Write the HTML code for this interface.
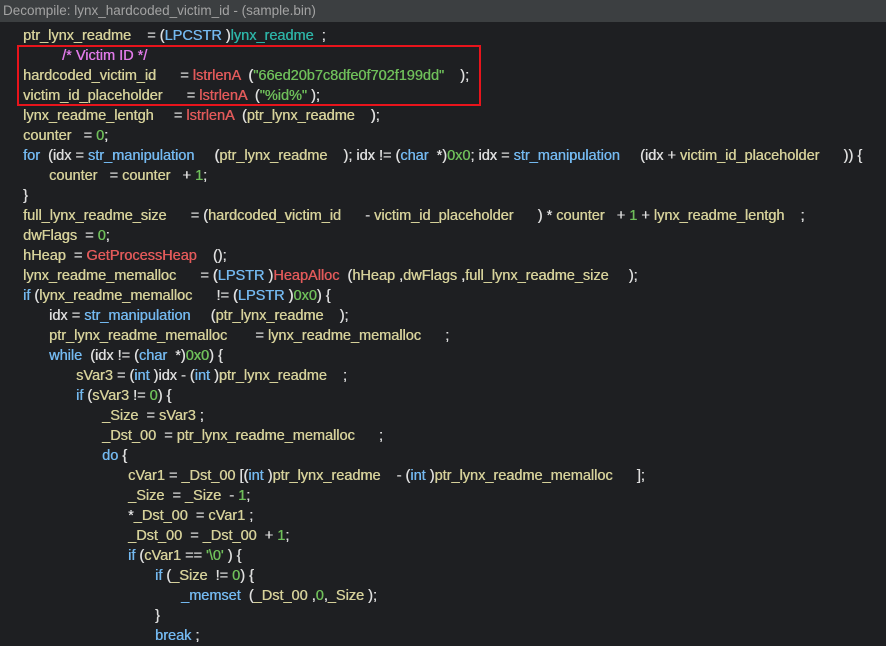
<!DOCTYPE html>
<html><head><meta charset="utf-8"><style>
body{margin:0;width:886px;height:636px;background:#1e1f22;overflow:hidden;font-family:"Liberation Sans",sans-serif;}
#t{position:absolute;left:0;top:0;width:886px;height:22px;background:#3c3f41;color:#a3a3a3;font-size:13.5px;line-height:22px;padding-left:3px;box-sizing:border-box;}
.l{position:absolute;white-space:pre;font-size:14.5px;line-height:20px;color:#dedede;text-shadow:0.4px 0 0 currentColor;}
.v{color:#d6d19a}.k{color:#74b9f0}.f{color:#e25a5a}.s{color:#6fbf5a}.n{color:#6fbf5a}.c{color:#e07ae8}.g{color:#2db3a6}
#box{position:absolute;left:17px;top:45px;width:460px;height:57px;border:2px solid #e8141c;}
</style></head><body>
<div id="t">Decompile: lynx_hardcoded_victim_id -  (sample.bin)</div>
<div class="l" style="left:23px;top:26px"><span class="v">ptr_lynx_readme</span>    = (<span class="k">LPCSTR</span> )<span class="g">lynx_readme</span>  ;</div>
<div class="l" style="left:62px;top:46px"><span class="c">/* Victim ID */</span></div>
<div class="l" style="left:23px;top:66px"><span class="v">hardcoded_victim_id</span>      = <span class="f">lstrlenA</span>  (<span class="s">"66ed20b7c8dfe0f702f199dd"</span>    );</div>
<div class="l" style="left:23px;top:86px"><span class="v">victim_id_placeholder</span>      = <span class="f">lstrlenA</span>  (<span class="s">"%id%"</span> );</div>
<div class="l" style="left:23px;top:106px"><span class="v">lynx_readme_lentgh</span>     = <span class="f">lstrlenA</span>  (<span class="v">ptr_lynx_readme</span>    );</div>
<div class="l" style="left:23px;top:126px"><span class="v">counter</span>   = <span class="n">0</span>;</div>
<div class="l" style="left:23px;top:146px"><span class="k">for</span>  (idx = <span class="k">str_manipulation</span>     (<span class="v">ptr_lynx_readme</span>    ); idx != (<span class="k">char</span>  *)<span class="n">0x0</span>; idx = <span class="k">str_manipulation</span>     (idx + <span class="v">victim_id_placeholder</span>      )) {</div>
<div class="l" style="left:49px;top:166px"><span class="v">counter</span>   = <span class="v">counter</span>   + <span class="n">1</span>;</div>
<div class="l" style="left:23px;top:186px">}</div>
<div class="l" style="left:23px;top:206px"><span class="v">full_lynx_readme_size</span>      = (<span class="v">hardcoded_victim_id</span>      - <span class="v">victim_id_placeholder</span>      ) * <span class="v">counter</span>   + <span class="n">1</span> + <span class="v">lynx_readme_lentgh</span>    ;</div>
<div class="l" style="left:23px;top:226px"><span class="v">dwFlags</span>  = <span class="n">0</span>;</div>
<div class="l" style="left:23px;top:246px"><span class="v">hHeap</span>  = <span class="f">GetProcessHeap</span>    ();</div>
<div class="l" style="left:23px;top:266px"><span class="v">lynx_readme_memalloc</span>      = (<span class="k">LPSTR</span> )<span class="f">HeapAlloc</span>  (<span class="v">hHeap</span> ,<span class="v">dwFlags</span> ,<span class="v">full_lynx_readme_size</span>     );</div>
<div class="l" style="left:23px;top:286px"><span class="k">if</span> (<span class="v">lynx_readme_memalloc</span>      != (<span class="k">LPSTR</span> )<span class="n">0x0</span>) {</div>
<div class="l" style="left:49px;top:306px">idx = <span class="k">str_manipulation</span>     (<span class="v">ptr_lynx_readme</span>    );</div>
<div class="l" style="left:49px;top:326px"><span class="v">ptr_lynx_readme_memalloc</span>       = <span class="v">lynx_readme_memalloc</span>      ;</div>
<div class="l" style="left:49px;top:346px"><span class="k">while</span>  (idx != (<span class="k">char</span>  *)<span class="n">0x0</span>) {</div>
<div class="l" style="left:76px;top:366px"><span class="v">sVar3</span> = (<span class="k">int</span> )idx - (<span class="k">int</span> )<span class="v">ptr_lynx_readme</span>    ;</div>
<div class="l" style="left:76px;top:386px"><span class="k">if</span> (<span class="v">sVar3</span> != <span class="n">0</span>) {</div>
<div class="l" style="left:102px;top:406px"><span class="v">_Size</span>  = <span class="v">sVar3</span> ;</div>
<div class="l" style="left:102px;top:426px"><span class="v">_Dst_00</span>  = <span class="v">ptr_lynx_readme_memalloc</span>      ;</div>
<div class="l" style="left:102px;top:446px"><span class="k">do</span> {</div>
<div class="l" style="left:128px;top:466px"><span class="v">cVar1</span> = <span class="v">_Dst_00</span> [(<span class="k">int</span> )<span class="v">ptr_lynx_readme</span>    - (<span class="k">int</span> )<span class="v">ptr_lynx_readme_memalloc</span>      ];</div>
<div class="l" style="left:128px;top:486px"><span class="v">_Size</span>  = <span class="v">_Size</span>  - <span class="n">1</span>;</div>
<div class="l" style="left:128px;top:506px">*<span class="v">_Dst_00</span>  = <span class="v">cVar1</span> ;</div>
<div class="l" style="left:128px;top:526px"><span class="v">_Dst_00</span>  = <span class="v">_Dst_00</span>  + <span class="n">1</span>;</div>
<div class="l" style="left:128px;top:546px"><span class="k">if</span> (<span class="v">cVar1</span> == <span class="s">'\0'</span> ) {</div>
<div class="l" style="left:155px;top:566px"><span class="k">if</span> (<span class="v">_Size</span>  != <span class="n">0</span>) {</div>
<div class="l" style="left:181px;top:586px"><span class="k">_memset</span>  (<span class="v">_Dst_00</span> ,<span class="n">0</span>,<span class="v">_Size</span> );</div>
<div class="l" style="left:155px;top:606px">}</div>
<div class="l" style="left:155px;top:626px"><span class="k">break</span> ;</div>
<div id="box"></div>
</body></html>
